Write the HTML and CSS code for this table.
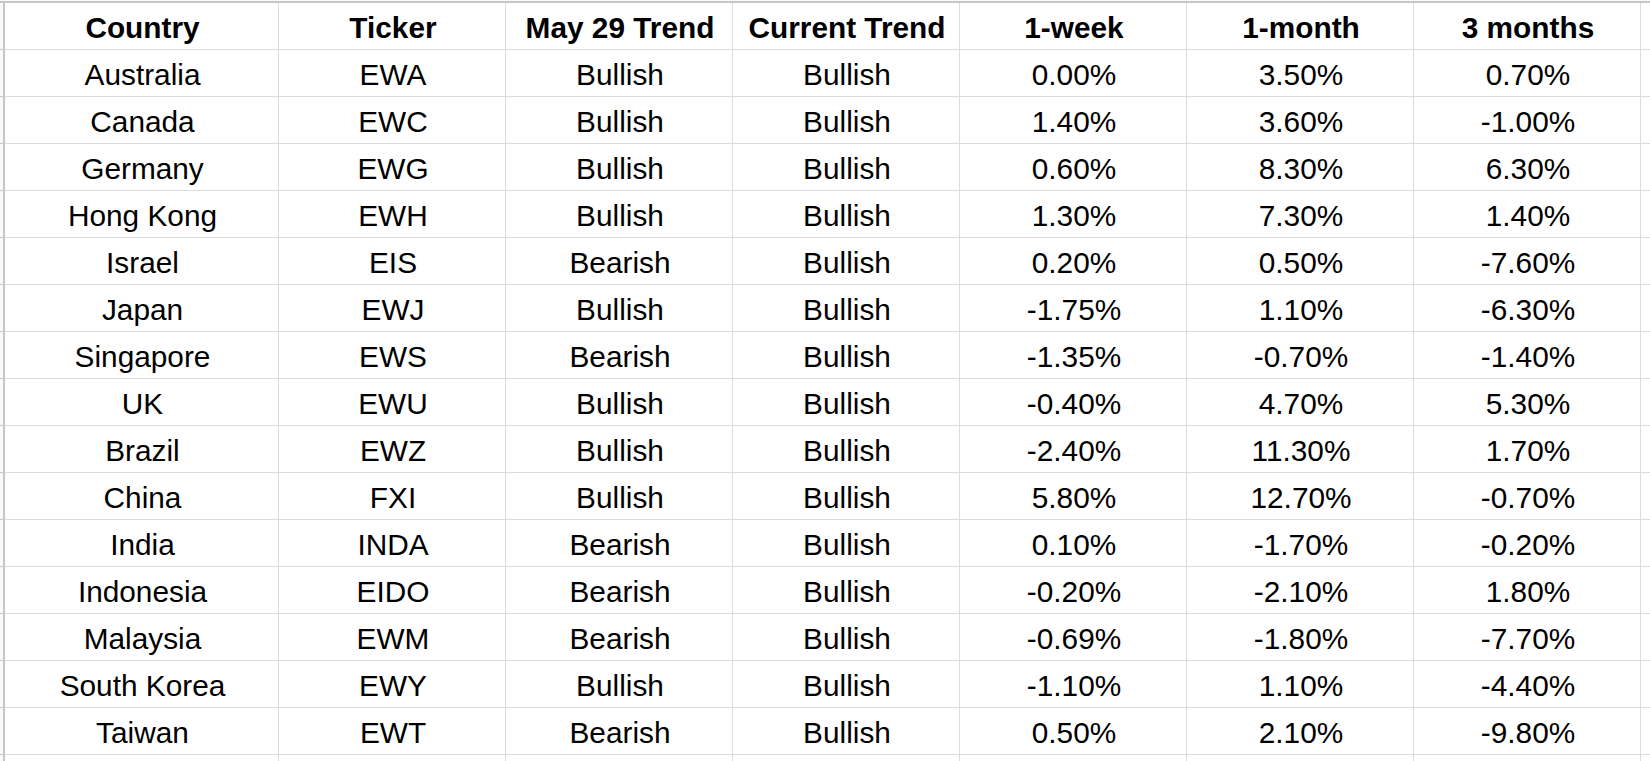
FILE: index.html
```html
<!DOCTYPE html>
<html>
<head>
<meta charset="utf-8">
<link rel="stylesheet" href="styles.css">
</head>
<body>
<div class="page">
  <div class="topbar"></div>
  <div class="sheet">
    <div class="gut"></div><div class="c h">Country</div><div class="c h">Ticker</div><div class="c h">May 29 Trend</div><div class="c h">Current Trend</div><div class="c h">1-week</div><div class="c h">1-month</div><div class="c h">3 months</div><div class="c x"></div>
    <div class="gut"></div><div class="c">Australia</div><div class="c">EWA</div><div class="c">Bullish</div><div class="c">Bullish</div><div class="c">0.00%</div><div class="c">3.50%</div><div class="c">0.70%</div><div class="c x"></div>
    <div class="gut"></div><div class="c">Canada</div><div class="c">EWC</div><div class="c">Bullish</div><div class="c">Bullish</div><div class="c">1.40%</div><div class="c">3.60%</div><div class="c">-1.00%</div><div class="c x"></div>
    <div class="gut"></div><div class="c">Germany</div><div class="c">EWG</div><div class="c">Bullish</div><div class="c">Bullish</div><div class="c">0.60%</div><div class="c">8.30%</div><div class="c">6.30%</div><div class="c x"></div>
    <div class="gut"></div><div class="c">Hong Kong</div><div class="c">EWH</div><div class="c">Bullish</div><div class="c">Bullish</div><div class="c">1.30%</div><div class="c">7.30%</div><div class="c">1.40%</div><div class="c x"></div>
    <div class="gut"></div><div class="c">Israel</div><div class="c">EIS</div><div class="c">Bearish</div><div class="c">Bullish</div><div class="c">0.20%</div><div class="c">0.50%</div><div class="c">-7.60%</div><div class="c x"></div>
    <div class="gut"></div><div class="c">Japan</div><div class="c">EWJ</div><div class="c">Bullish</div><div class="c">Bullish</div><div class="c">-1.75%</div><div class="c">1.10%</div><div class="c">-6.30%</div><div class="c x"></div>
    <div class="gut"></div><div class="c">Singapore</div><div class="c">EWS</div><div class="c">Bearish</div><div class="c">Bullish</div><div class="c">-1.35%</div><div class="c">-0.70%</div><div class="c">-1.40%</div><div class="c x"></div>
    <div class="gut"></div><div class="c">UK</div><div class="c">EWU</div><div class="c">Bullish</div><div class="c">Bullish</div><div class="c">-0.40%</div><div class="c">4.70%</div><div class="c">5.30%</div><div class="c x"></div>
    <div class="gut"></div><div class="c">Brazil</div><div class="c">EWZ</div><div class="c">Bullish</div><div class="c">Bullish</div><div class="c">-2.40%</div><div class="c">11.30%</div><div class="c">1.70%</div><div class="c x"></div>
    <div class="gut"></div><div class="c">China</div><div class="c">FXI</div><div class="c">Bullish</div><div class="c">Bullish</div><div class="c">5.80%</div><div class="c">12.70%</div><div class="c">-0.70%</div><div class="c x"></div>
    <div class="gut"></div><div class="c">India</div><div class="c">INDA</div><div class="c">Bearish</div><div class="c">Bullish</div><div class="c">0.10%</div><div class="c">-1.70%</div><div class="c">-0.20%</div><div class="c x"></div>
    <div class="gut"></div><div class="c">Indonesia</div><div class="c">EIDO</div><div class="c">Bearish</div><div class="c">Bullish</div><div class="c">-0.20%</div><div class="c">-2.10%</div><div class="c">1.80%</div><div class="c x"></div>
    <div class="gut"></div><div class="c">Malaysia</div><div class="c">EWM</div><div class="c">Bearish</div><div class="c">Bullish</div><div class="c">-0.69%</div><div class="c">-1.80%</div><div class="c">-7.70%</div><div class="c x"></div>
    <div class="gut"></div><div class="c">South Korea</div><div class="c">EWY</div><div class="c">Bullish</div><div class="c">Bullish</div><div class="c">-1.10%</div><div class="c">1.10%</div><div class="c">-4.40%</div><div class="c x"></div>
    <div class="gut"></div><div class="c">Taiwan</div><div class="c">EWT</div><div class="c">Bearish</div><div class="c">Bullish</div><div class="c">0.50%</div><div class="c">2.10%</div><div class="c">-9.80%</div><div class="c x"></div>
    <div class="gut"></div><div class="c"></div><div class="c"></div><div class="c"></div><div class="c"></div><div class="c"></div><div class="c"></div><div class="c"></div><div class="c x"></div>
  </div>
</div>
</body>
</html>
```
FILE: styles.css
```css
html, body {
  margin: 0;
  padding: 0;
  background: #ffffff;
  overflow: hidden;
}
.page {
  width: 1650px;
  height: 761px;
  overflow: hidden;
  font-family: "Liberation Sans", Arial, sans-serif;
  color: #000000;
}
.topbar {
  height: 1px;
  background: #f8f9fa;
  border-bottom: 2px solid #c4c7c5;
}
.sheet {
  display: grid;
  grid-template-columns: 5px 274px repeat(6, 227px) 100px;
  grid-auto-rows: 47px;
}
.gut {
  background: #f8f9fa;
  border-right: 2px solid #c4c7c5;
  border-bottom: 1px solid #c4c7c5;
  box-sizing: content-box;
}
.c {
  box-sizing: border-box;
  border-right: 1px solid #dcdcdc;
  border-bottom: 1px solid #dcdcdc;
  display: flex;
  align-items: center;
  justify-content: center;
  font-size: 29.8px;
  padding-top: 3px;
  padding-left: 2px;
  white-space: nowrap;
}
.h {
  font-weight: bold;
}
```
